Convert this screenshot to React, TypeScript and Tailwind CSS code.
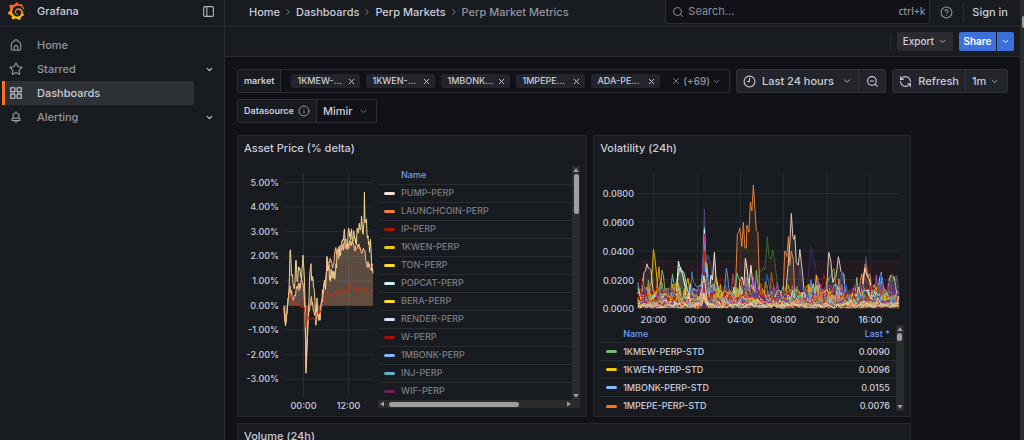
import type { ReactNode } from 'react';
import {
  ChevronDown,
  ChevronRight,
  CircleHelp,
  Clock9,
  Info,
  PanelLeft,
  RefreshCcw,
  Search,
  Star,
  X,
  ZoomOut,
} from 'lucide-react';
import { SiGrafana } from 'react-icons/si';
import clsx from 'clsx';

type Point = [number, number];

interface LegendRow {
  name: string;
  color: string;
  value?: string;
}

function PathIcon({ d }: { d: string }) {
  return (
    <svg viewBox="0 0 24 24" className="size-3.5 fill-current" aria-hidden="true">
      <path d={d} />
    </svg>
  );
}

const HOME_PATH =
  'M20,8h0L14,2.74a3,3,0,0,0-4,0L4,8a3,3,0,0,0-1,2.26V19a3,3,0,0,0,3,3H18a3,3,0,0,0,3-3V10.25A3,3,0,0,0,20,8ZM14,20H10V15a1,1,0,0,1,1-1h2a1,1,0,0,1,1,1Zm5-1a1,1,0,0,1-1,1H16V15a3,3,0,0,0-3-3H11a3,3,0,0,0-3,3v5H6a1,1,0,0,1-1-1V10.25a1,1,0,0,1,.34-.75l6-5.25a1,1,0,0,1,1.32,0l6,5.25a1,1,0,0,1,.34.75Z';
const APPS_PATH =
  'M10,13H3a1,1,0,0,0-1,1v7a1,1,0,0,0,1,1h7a1,1,0,0,0,1-1V14A1,1,0,0,0,10,13ZM9,20H4V15H9ZM21,2H14a1,1,0,0,0-1,1v7a1,1,0,0,0,1,1h7a1,1,0,0,0,1-1V3A1,1,0,0,0,21,2ZM20,9H15V4h5Zm1,4H14a1,1,0,0,0-1,1v7a1,1,0,0,0,1,1h7a1,1,0,0,0,1-1V14A1,1,0,0,0,21,13Zm-1,7H15V15h5ZM10,2H3A1,1,0,0,0,2,3v7a1,1,0,0,0,1,1h7a1,1,0,0,0,1-1V3A1,1,0,0,0,10,2ZM9,9H4V4H9Z';
const BELL_PATH =
  'M18,13.18V10a6,6,0,0,0-5-5.91V3a1,1,0,0,0-2,0V4.09A6,6,0,0,0,6,10v3.18A3,3,0,0,0,4,16v2a1,1,0,0,0,1,1H8.14a4,4,0,0,0,7.72,0H19a1,1,0,0,0,1-1V16A3,3,0,0,0,18,13.18ZM8,10a4,4,0,0,1,8,0v3H8Zm4,10a2,2,0,0,1-1.72-1h3.44A2,2,0,0,1,12,20Zm6-3H6V16a1,1,0,0,1,1-1H17a1,1,0,0,1,1,1Z';

const NAV = [
  { label: 'Home', icon: <PathIcon d={HOME_PATH} /> },
  { label: 'Starred', icon: <Star size={14} />, expandable: true },
  { label: 'Dashboards', icon: <PathIcon d={APPS_PATH} />, active: true },
  { label: 'Alerting', icon: <PathIcon d={BELL_PATH} />, expandable: true },
];

const CRUMBS = ['Home', 'Dashboards', 'Perp Markets'];
const MARKETS = ['1KMEW-...', '1KWEN-...', '1MBONK...', '1MPEPE...', 'ADA-PE...'];

const PRICE_LEGEND: LegendRow[] = [
  { name: 'PUMP-PERP', color: '#f9e2d2' },
  { name: 'LAUNCHCOIN-PERP', color: '#ef843c' },
  { name: 'IP-PERP', color: '#a81502' },
  { name: '1KWEN-PERP', color: '#f2c414' },
  { name: 'TON-PERP', color: '#fade2a' },
  { name: 'POPCAT-PERP', color: '#cff0fa' },
  { name: 'BERA-PERP', color: '#fade2a' },
  { name: 'RENDER-PERP', color: '#dedaf7' },
  { name: 'W-PERP', color: '#a01208' },
  { name: '1MBONK-PERP', color: '#8ab8ff' },
  { name: 'INJ-PERP', color: '#64b0c8' },
  { name: 'WIF-PERP', color: '#6d1f62' },
];

const VOL_LEGEND: LegendRow[] = [
  { name: '1KMEW-PERP-STD', color: '#73bf69', value: '0.0090' },
  { name: '1KWEN-PERP-STD', color: '#f2cc0c', value: '0.0096' },
  { name: '1MBONK-PERP-STD', color: '#8ab8ff', value: '0.0155' },
  { name: '1MPEPE-PERP-STD', color: '#ff780a', value: '0.0076' },
];

// small deterministic generator, so that the series are stable between renders
function createRandom(seed: number) {
  let s = seed;
  return () => {
    s = (s * 1664525 + 1013904223) % 4294967296;
    return s / 4294967296;
  };
}

function toPath(points: Point[]) {
  return points.map(([x, y], i) => `${i ? 'L' : 'M'}${x.toFixed(1)} ${y.toFixed(1)}`).join('');
}

// fills in the samples between key points and adds some noise
function densify(keys: Point[], step: number, noise: number, seed: number): Point[] {
  const rand = createRandom(seed);
  const out: Point[] = [];
  for (let i = 0; i < keys.length - 1; i++) {
    const [x0, y0] = keys[i];
    const [x1, y1] = keys[i + 1];
    const n = Math.max(1, Math.round((x1 - x0) / step));
    for (let k = 0; k < n; k++) {
      const t = k / n;
      out.push([x0 + (x1 - x0) * t, y0 + (y1 - y0) * t + (k ? (rand() - 0.5) * noise : 0)]);
    }
  }
  out.push(keys[keys.length - 1]);
  return out;
}

/* ---------- asset price ---------- */

const priceX = (t: number) => 46 + t;
const priceY = (pct: number) => 139.5 - pct * 24.6;

const PUMP: Point[] = [
  [0, 0], [1, -0.7], [3, -0.3], [4, 0.3], [5, 0.6], [6, 2.2], [7, 1.8], [8, 1.2], [9, 0.9], [11, 1], [12, 1.85],
  [13, 1], [14, 1.2], [16, 1.5], [17, 1.2], [18, 1.5], [19, 2.05], [20, 1.4], [21, 0.2], [21.6, -1.5], [22, -2.75],
  [23, -1.8], [24, -0.8], [25, 0.3], [26, 1.4], [27, 1.7], [28, 1], [29, 1.1], [30, 0.7], [31, 0.2], [32, -0.8],
  [33, 0.3], [34, -0.4], [36, -0.6], [37, -0.1], [38, 0.3], [40, 0.9], [41, 0.8], [42, 1], [43, 2], [44, 1.5],
  [46, 1.2], [48, 1.1], [49, 1.4], [51, 1.1], [52, 1.7], [54, 2.3], [55, 2], [57, 2.4], [59, 2.7], [60, 3],
  [61, 2.6], [63, 2.5], [64, 2.9], [66, 3], [68, 2.8], [70, 3], [72, 2.7], [74, 3], [76, 3.1], [78, 3.4],
  [79, 2.9], [80, 3.4], [80.4, 4.6], [81, 3.4], [82, 3.5], [83, 2.9], [85, 2.6], [86, 2.4], [87, 2.3], [88, 1.4],
  [89, 1.3],
];
const LAUNCH: Point[] = [
  [0, -0.1], [2, -0.7], [3, -0.3], [4, 0.2], [5, 0.6], [6, 0.8], [8, 0.4], [9, 0.3], [11, 0.4], [12, 0.6],
  [14, 0.8], [16, 0.7], [17, 1], [19, 0.9], [20, 0.5], [21, -0.5], [22, -2.5], [23, -1.4], [24, -0.5], [26, 0],
  [27, 0.3], [29, -0.1], [31, -0.4], [33, 0.1], [34, -0.5], [36, -0.4], [37, 0], [39, 0.4], [40, 0.9], [41, 0.9],
  [42, 1.2], [43, 1.9], [45, 1.7], [46, 1.9], [48, 1.7], [49, 1.6], [51, 2.2], [53, 2.2], [55, 2.4], [58, 2.3],
  [61, 2.5], [63, 2.3], [66, 2.5], [67, 2.6], [70, 2.4], [72, 2.3], [75, 2.5], [77, 2.2], [79, 2.3], [81, 2.2],
  [83, 1.6], [85, 1.7], [87, 1.5], [89, 1.6],
];
const IP: Point[] = [
  [6, 0.5], [10, 0], [12, 0.1], [16, 0.05], [19, 0], [21, -0.3], [22, -0.9], [23, -0.5], [25, -0.6], [28, -0.5],
  [31, -0.6], [33, -0.3], [36, -0.3], [39, 0], [41, 0.3], [43, 0.6], [45, 0.5], [47, 0.3], [50, 0.5], [53, 0.6],
  [59, 0.55], [64, 0.6], [66, 0.9], [69, 0.7], [73, 0.7], [77, 0.65], [81, 0.65], [86, 0.5], [89, 0.65],
];

const priceSeries = [
  { keys: IP, color: '#c4301a', noise: 0.2, step: 1, seed: 7, fill: 0.08 },
  { keys: PUMP, color: '#f2d590', noise: 0.7, step: 0.5, seed: 21, fill: 0.12 },
  { keys: LAUNCH, color: '#fbb98a', noise: 0.35, step: 0.5, seed: 5, fill: 0.2 },
].map((s) => {
  const points = densify(s.keys, s.step, s.noise, s.seed).map(([t, v]): Point => [priceX(t), priceY(v)]);
  return { ...s, start: points[0][0], line: toPath(points) };
});

function PriceChart() {
  return (
    <svg viewBox="0 0 140 244" className="w-[140px] shrink-0 font-medium" role="img" aria-label="Asset price chart">
      {[5, 4, 3, 2, 1, 0, -1, -2, -3].map((v) => (
        <g key={v}>
          <line x1="46" x2="135" y1={priceY(v)} y2={priceY(v)} stroke="#2a2d32" />
          <text x="41" y={priceY(v) + 3} textAnchor="end" fontSize="9" fill="#ccccdc">
            {v.toFixed(2)}%
          </text>
        </g>
      ))}
      {[['00:00', 65.5], ['12:00', 110.5]].map(([label, x]) => (
        <g key={label}>
          <line x1={x} x2={x} y1="7" y2="231" stroke="#2a2d32" />
          <text x={x} y="243" textAnchor="middle" fontSize="9" fill="#ccccdc">
            {label}
          </text>
        </g>
      ))}
      {priceSeries.map((s) => (
        <path key={s.color} d={`${s.line}L135 139.5L${s.start} 139.5Z`} fill={s.color} fillOpacity={s.fill} />
      ))}
      {[1, 2, 0].map((i) => (
        <path key={i} d={priceSeries[i].line} fill="none" stroke={priceSeries[i].color} strokeWidth="1" />
      ))}
    </svg>
  );
}

/* ---------- volatility ---------- */

const volY = (v: number) => 142.5 - v * 1437.5;

const NOISE_COLORS = [
  '#73bf69', '#e0b400', '#8ab8ff', '#ff780a', '#a352cc', '#1f60c4', '#a01208', '#6d1f62', '#447ebc', '#c15c17',
  '#890f02', '#e0b400', '#584477', '#b7dbab', '#ef843c', '#70dbed', '#bf1b00', '#e5ac0e', '#962d82', '#614d93',
  '#629e51', '#f9ba8f', '#1f60c4', '#e0752d', '#bf1b00', '#e0b400', '#962d82', '#64b0c8', '#a01208', '#f4d598',
  '#5195ce', '#f9934e', '#962d82', '#9ac48a', '#f2c96d', '#f4d598',
];

const noiseSeries = NOISE_COLORS.map((color, i) => {
  const rand = createRandom(i * 7919 + 13);
  for (let k = 0; k < 5; k++) rand();
  const scale = 0.018 - (i / NOISE_COLORS.length) * 0.014;
  const points: Point[] = [];
  let level = rand();
  for (let x = 44; x <= 305; x += 1.5) {
    level = level * 0.55 + rand() * 0.45;
    const burst = rand() > 0.965 ? 1 + rand() : 0;
    level += burst * 0.3;
    const v = Math.max(0.0004, (level - 0.2) * scale * 1.5);
    // all markets moved together just after midnight
    const shared = Math.max(0, 1 - Math.abs(x - 110.5) / 3.5) * rand() * 0.022;
    points.push([x, volY(v + shared)]);
  }
  return { color, line: toPath(points) };
});

const SPIKES: { color: string; points: Point[] }[] = [
  { color: '#584477', points: [[106, 0.005], [108, 0.02], [110.5, 0.069], [112, 0.03], [114, 0.037], [117, 0.03], [119, 0.008]] },
  { color: '#5195ce', points: [[107, 0.006], [109, 0.02], [110.5, 0.057], [113, 0.02], [115, 0.008]] },
  { color: '#cffaff', points: [[108, 0.008], [110.5, 0.055], [112, 0.018], [115, 0.006]] },
  { color: '#962d82', points: [[106, 0.004], [109, 0.03], [110.5, 0.052], [113, 0.012], [116, 0.004]] },
  { color: '#bf1b00', points: [[107, 0.005], [109, 0.018], [110.5, 0.04], [112, 0.015], [115, 0.006]] },
  { color: '#629e51', points: [[79, 0.006], [82, 0.017], [85, 0.03], [88, 0.024], [91, 0.016], [94, 0.006]] },
  { color: '#b7dbab', points: [[81, 0.004], [84, 0.022], [86, 0.028], [89, 0.026], [92, 0.018], [96, 0.009], [101, 0.006]] },
  { color: '#cffaff', points: [[82, 0.008], [84.5, 0.033], [87, 0.028], [90, 0.019], [94, 0.012], [98, 0.012], [104, 0.014]] },
  { color: '#e0b400', points: [[44, 0.016], [47, 0.007], [53, 0.009], [57, 0.016], [59.5, 0.041], [62, 0.028], [65, 0.008], [90, 0.01], [94, 0.021], [98, 0.009]] },
  { color: '#dfc9bb', points: [[44, 0.008], [48, 0.012], [50, 0.025], [53, 0.031], [57, 0.027], [59, 0.013], [62, 0.006]] },
  { color: '#ef843c', points: [[44, 0.018], [46, 0.01], [49, 0.021], [51, 0.008], [62, 0.008], [65, 0.029], [68, 0.008]] },
  { color: '#f9e2d2', points: [[115, 0.006], [117, 0.023], [118.5, 0.02], [120.5, 0.039], [122, 0.022], [124, 0.016], [127, 0.005]] },
  { color: '#e0b400', points: [[118, 0.005], [122, 0.022], [125, 0.009], [130, 0.014], [134, 0.006]] },
  { color: '#5195ce', points: [[129, 0.005], [132.5, 0.028], [135, 0.014], [138, 0.005]] },
  { color: '#b8453a', points: [[136, 0.004], [139, 0.024], [142, 0.006]] },
  { color: '#3f6833', points: [[164, 0.004], [166, 0.027], [171, 0.027], [173.5, 0.05], [175, 0.036], [177, 0.034], [179, 0.041], [181, 0.032], [183, 0.02], [186, 0.006]] },
  { color: '#e0803f', points: [[141, 0.006], [142, 0.022], [143.5, 0.052], [146, 0.056], [148, 0.043], [149.5, 0.06], [151, 0.042], [152.5, 0.042], [153, 0.058], [155, 0.053], [156.5, 0.074], [158, 0.068], [159.5, 0.086], [161, 0.07], [162.5, 0.054], [164, 0.053], [165, 0.03], [166, 0.006]] },
  { color: '#f9e2d2', points: [[144, 0.004], [146, 0.018], [148, 0.022], [150, 0.016], [151.5, 0.035], [153.5, 0.026], [155, 0.014], [157, 0.03], [159, 0.017], [161, 0.008]] },
  { color: '#e0803f', points: [[189, 0.006], [191, 0.04], [193, 0.036], [194.5, 0.05], [196, 0.03], [197.5, 0.04], [199.5, 0.034], [201, 0.006]] },
  { color: '#3a2d60', points: [[203, 0.008], [206, 0.029], [209, 0.012], [213, 0.01], [215, 0.028], [217.5, 0.043], [220, 0.034], [222, 0.028], [224, 0.008]] },
  { color: '#dfc9bb', points: [[191, 0.005], [194, 0.028], [196, 0.045], [197.5, 0.066], [199, 0.05], [200, 0.048], [201, 0.051], [202.5, 0.032], [204.5, 0.03], [206, 0.041], [207.5, 0.032], [209, 0.022], [211, 0.006]] },
  { color: '#5195ce', points: [[214, 0.005], [217, 0.02], [220, 0.008]] },
  { color: '#e0b400', points: [[208, 0.006], [214, 0.016], [218, 0.008], [225, 0.018], [228, 0.007]] },
  { color: '#629e51', points: [[230, 0.006], [232, 0.018], [237, 0.022], [240, 0.028], [243, 0.008]] },
  { color: '#dfc9bb', points: [[232, 0.006], [235, 0.039], [237, 0.033], [239, 0.018], [242, 0.022], [244.5, 0.036], [247, 0.026], [250, 0.024], [252, 0.008]] },
  { color: '#584477', points: [[266, 0.006], [270, 0.02], [272, 0.036], [274, 0.026], [277, 0.008], [296, 0.008], [299, 0.02], [302, 0.022], [305, 0.009]] },
  { color: '#ef843c', points: [[264, 0.006], [268, 0.024], [269.5, 0.017], [271.5, 0.031], [274, 0.022], [276, 0.024], [279, 0.007]] },
  { color: '#f9e2d2', points: [[267, 0.004], [271, 0.028], [274, 0.022], [277, 0.016], [283, 0.01], [287.5, 0.025], [290, 0.008], [294, 0.014], [297, 0.023], [300, 0.022], [303, 0.01]] },
  { color: '#3f6833', points: [[294, 0.008], [298, 0.024], [301, 0.018], [303, 0.023], [305, 0.014]] },
];

const X_TICKS: [string, number][] = [
  ['20:00', 59.5],
  ['00:00', 103.5],
  ['04:00', 146.5],
  ['08:00', 189.5],
  ['12:00', 233.5],
  ['16:00', 276.5],
];

function VolatilityChart() {
  const floor = volY(0);
  return (
    <svg viewBox="0 0 316 159" className="w-full font-medium" role="img" aria-label="Volatility chart">
      {[0.08, 0.06, 0.04, 0.02, 0].map((v) => (
        <g key={v}>
          <line x1="44" x2="305" y1={volY(v)} y2={volY(v)} stroke="#2a2d32" />
          <text x="40" y={volY(v) + 4} textAnchor="end" fontSize="9" fill="#ccccdc">
            {v.toFixed(4)}
          </text>
        </g>
      ))}
      {X_TICKS.map(([label, x]) => (
        <g key={label}>
          <line x1={x} x2={x} y1="7" y2="146" stroke="#2a2d32" />
          <text x={x} y="157" textAnchor="middle" fontSize="9" fill="#ccccdc">
            {label}
          </text>
        </g>
      ))}
      <rect x="44" y="95" width="261" height="47.5" fill="#c4162a" fillOpacity="0.06" />
      <line x1="44" x2="305" y1="95.5" y2="95.5" stroke="#4c161b" />
      {SPIKES.map((s, i) => {
        const line = toPath(densify(s.points, 1.5, 0.004, i + 3).map(([x, v]): Point => [x, volY(v)]));
        const end = s.points[s.points.length - 1][0];
        return (
          <g key={i}>
            <path d={`${line}L${end} ${floor}L${s.points[0][0]} ${floor}Z`} fill={s.color} fillOpacity="0.1" />
            <path d={line} fill="none" stroke={s.color} strokeWidth="1" />
          </g>
        );
      })}
      {noiseSeries.map((s, i) => (
        <path key={i} d={s.line} fill="none" stroke={s.color} strokeWidth="1" />
      ))}
    </svg>
  );
}

/* ---------- building blocks ---------- */

function Panel({ title, className, children }: { title: string; className?: string; children?: ReactNode }) {
  return (
    <section className={clsx('flex flex-col border border-[#25272c] bg-[#181b1f]', className)}>
      <h2 className="px-1.5 pt-0.5 pb-2 text-[11px] leading-5 font-medium">{title}</h2>
      {children}
    </section>
  );
}

function Triangle({ className }: { className?: string }) {
  return (
    <svg viewBox="0 0 6 6" className={clsx('size-1.5 shrink-0 fill-[#a0a0a0]', className)} aria-hidden="true">
      <path d="M3 1L5.6 5H0.4Z" />
    </svg>
  );
}

function VerticalScrollbar({ thumb }: { thumb: string }) {
  return (
    <div className="flex w-2 shrink-0 flex-col items-center justify-between bg-[#2c2c2c] py-px">
      <div className="flex flex-col items-center gap-px">
        <Triangle />
        <div className={clsx('w-[5px] rounded-full bg-[#9f9f9f]', thumb)} />
      </div>
      <Triangle className="rotate-180" />
    </div>
  );
}

function LegendTable({ rows, dimmed }: { rows: LegendRow[]; dimmed?: boolean }) {
  const withValue = rows.some((r) => r.value);
  return (
    <table className="w-full border-collapse text-left text-[9px] leading-4 font-medium">
      <thead>
        <tr className="h-[18px] text-[#6e9fff]">
          <th className="w-[23px] p-0" aria-label="Color" />
          <th className="p-0 font-medium">Name</th>
          {withValue && <th className="p-0 pr-1.5 text-right font-medium">Last *</th>}
        </tr>
      </thead>
      <tbody>
        {rows.map((row) => (
          <tr key={row.name} className={clsx('h-[18px] border-t border-[#292c31]', dimmed && 'text-[#7d7e87]')}>
            <td className="p-0 pl-1.5">
              <div className="h-[3px] w-[11px] rounded-full" style={{ backgroundColor: row.color }} />
            </td>
            <td className="p-0">{row.name}</td>
            {withValue && <td className="p-0 pr-1.5 text-right">{row.value}</td>}
          </tr>
        ))}
      </tbody>
    </table>
  );
}

function Sidebar() {
  return (
    <aside className="w-[225px] shrink-0 border-r border-[#292b30] bg-[#181b1f]">
      <div className="flex h-[27px] items-center border-b border-[#292b30] pr-[9px] pb-1 pl-[7px]">
        <svg className="size-0" aria-hidden="true">
          <linearGradient id="grafana-logo" x1="0" y1="1" x2="0" y2="0">
            <stop offset="0" stopColor="#fcd20a" />
            <stop offset="0.5" stopColor="#f58a2c" />
            <stop offset="1" stopColor="#f05a28" />
          </linearGradient>
        </svg>
        <SiGrafana size={18} fill="url(#grafana-logo)" />
        <span className="ml-3 flex-1 text-[11px] font-medium">Grafana</span>
        <button type="button" aria-label="Undock menu">
          <PanelLeft size={13} className="text-[#b5b6c3]" />
        </button>
      </div>
      <nav className="pt-1.5 pl-0.5">
        <ul>
          {NAV.map(({ label, icon, active, expandable }) => (
            <li key={label} className="flex h-6 items-center justify-between pr-2.5">
              <a
                href={`#${label.toLowerCase()}`}
                className={clsx(
                  'flex h-6 w-48 items-center gap-3.5 rounded-r-xs border-l-[3px] pl-1 text-[11px] font-medium',
                  active ? 'border-[#ff6f20] bg-[#2e3135]' : 'border-transparent text-[#93949f]',
                )}
              >
                {icon}
                {label}
              </a>
              {expandable && (
                <button type="button" aria-label={`Expand ${label}`}>
                  <ChevronDown size={9} strokeWidth={3} />
                </button>
              )}
            </li>
          ))}
        </ul>
      </nav>
    </aside>
  );
}

function TopBar() {
  return (
    <header className="flex h-[27px] items-center border-b border-[#292b30] bg-[#181b1f] pr-3 pl-6 text-[11px] font-medium">
      <nav aria-label="Breadcrumbs" className="flex flex-1 items-center gap-[3px] pb-0.5">
        {CRUMBS.map((crumb) => (
          <span key={crumb} className="flex items-center gap-[3px]">
            <a href={`#${crumb}`}>{crumb}</a>
            <ChevronRight size={10} className="text-[#93949f]" />
          </span>
        ))}
        <span className="text-[#93949f]">Perp Market Metrics</span>
      </nav>
      <label className="flex h-6 w-[265px] items-center gap-1 self-start rounded-b-xs border border-t-0 border-[#2c2e33] bg-[#111217] pr-1 pl-1.5 text-[#8e8f9a]">
        <Search size={12} strokeWidth={2} />
        <input
          type="search"
          aria-label="Search"
          placeholder="Search..."
          className="min-w-0 flex-1 font-normal placeholder:text-[#8e8f9a] focus:outline-none"
        />
        <kbd className="font-sans text-[10px]">ctrl+k</kbd>
      </label>
      <button type="button" aria-label="Help" className="ml-2.5 pb-0.5 text-[#93949f]">
        <CircleHelp size={13} />
      </button>
      <div className="ml-2.5 h-5 w-px bg-[#2c2e33]" />
      <a href="#login" className="ml-2 pb-0.5">
        Sign in
      </a>
    </header>
  );
}

function Toolbar() {
  return (
    <div className="flex h-[30px] items-center justify-end border-b border-[#292b30] bg-[#181b1f] pr-1.5 text-[10px] font-medium">
      <div className="mr-1.5 h-[18px] w-px bg-[#2c2e33]" />
      <button type="button" className="flex h-[19px] items-center gap-1 rounded-xs bg-[#2b2c31] px-1.5">
        Export
        <ChevronDown size={9} />
      </button>
      <button type="button" className="ml-1.5 h-[19px] w-[37px] rounded-l-xs bg-[#3d71d9] font-semibold text-white">
        Share
      </button>
      <button
        type="button"
        aria-label="Share options"
        className="ml-px flex h-[19px] items-center rounded-r-xs bg-[#3d71d9] px-1 text-white"
      >
        <ChevronDown size={9} strokeWidth={2.5} />
      </button>
    </div>
  );
}

function Controls() {
  return (
    <div className="flex items-start gap-1.5 text-[11px] font-medium">
      <div className="flex min-w-0 flex-1 flex-wrap gap-1.5">
        <div className="flex h-6 w-full items-center rounded-xs border border-[#2c2e33]">
          <label
            htmlFor="market"
            className="flex h-full items-center border-r border-[#2c2e33] bg-[#181b1f] px-1.5 text-[9px] font-semibold"
          >
            market
          </label>
          <ul className="ml-2.5 flex gap-1.5 text-[9px]">
            {MARKETS.map((market) => (
              <li key={market} className="flex h-3.5 w-[69px] items-center justify-between rounded-xs bg-[#22252b] pr-1 pl-1.5">
                {market}
                <button type="button" aria-label={`Remove ${market}`}>
                  <X size={9} strokeWidth={2.5} />
                </button>
              </li>
            ))}
          </ul>
          <input id="market" type="text" className="w-0 flex-1 focus:outline-none" />
          <div className="flex items-center gap-0.5 pr-2 text-[10px] text-[#93949f]">
            <button type="button" aria-label="Clear markets">
              <X size={10} />
            </button>
            (+69)
            <ChevronDown size={9} />
          </div>
        </div>
        <div className="flex h-6 items-center rounded-xs border border-[#2c2e33]">
          <label
            htmlFor="datasource"
            className="flex h-full items-center gap-1 border-r border-[#2c2e33] bg-[#181b1f] px-1.5 text-[9px] font-semibold"
          >
            Datasource
            <Info size={12} className="text-[#93949f]" />
          </label>
          <div className="grid items-center">
            <select id="datasource" className="col-start-1 row-start-1 w-[59px] appearance-none pl-1.5 focus:outline-none">
              <option>Mimir</option>
            </select>
            <ChevronDown size={9} className="pointer-events-none col-start-1 row-start-1 mr-2 justify-self-end text-[#93949f]" />
          </div>
        </div>
      </div>

      <div className="flex h-6 shrink-0 rounded-xs border border-[#303238] bg-[#22252b]">
        <button type="button" className="flex w-[122px] items-center gap-1.5 border-r border-[#303238] px-1.5">
          <Clock9 size={13} />
          <span className="flex-1 text-left">Last 24 hours</span>
          <ChevronDown size={10} />
        </button>
        <button type="button" aria-label="Zoom out time range" className="flex w-[26px] items-center justify-center">
          <ZoomOut size={13} />
        </button>
      </div>

      <div className="flex h-6 shrink-0 rounded-xs border border-[#303238] bg-[#22252b]">
        <button type="button" className="flex w-[73px] items-center justify-between border-r border-[#303238] px-1.5">
          <RefreshCcw size={13} />
          Refresh
        </button>
        <div className="grid items-center">
          <select
            aria-label="Refresh interval"
            className="col-start-1 row-start-1 w-[41px] appearance-none pl-1.5 focus:outline-none"
          >
            <option>1m</option>
          </select>
          <ChevronDown size={9} className="pointer-events-none col-start-1 row-start-1 mr-2 justify-self-end" />
        </div>
      </div>
    </div>
  );
}

export default function App() {
  return (
    <div className="flex h-screen overflow-hidden bg-[#111217] font-['Inter',sans-serif] text-[#ccccdc]">
      <Sidebar />
      <div className="flex min-w-0 flex-1 flex-col">
        <TopBar />
        <Toolbar />
        <main className="min-h-0 flex-1 px-3 pt-3">
          <Controls />
          <div className="mt-3 grid grid-cols-24 gap-1.5">
            <Panel title="Asset Price (% delta)" className="col-span-11">
              <div className="flex pr-1.5 pb-1.5">
                <PriceChart />
                <div className="min-w-0 flex-1">
                  <div className="flex">
                    <div className="min-w-0 flex-1">
                      <LegendTable rows={PRICE_LEGEND} dimmed />
                    </div>
                    <VerticalScrollbar thumb="h-10" />
                  </div>
                  <div className="flex h-2 items-center gap-1 bg-[#2c2c2c] pr-2 pl-px">
                    <Triangle className="-rotate-90" />
                    <div className="flex-1">
                      <div className="h-[5px] w-3/4 rounded-full bg-[#9f9f9f]" />
                    </div>
                    <Triangle className="rotate-90" />
                  </div>
                </div>
              </div>
            </Panel>
            <Panel title="Volatility (24h)" className="col-span-10">
              <VolatilityChart />
              <div className="flex h-[86px] overflow-hidden pr-1.5 pl-1.5">
                <div className="min-w-0 flex-1">
                  <LegendTable rows={VOL_LEGEND} />
                </div>
                <VerticalScrollbar thumb="h-2" />
              </div>
            </Panel>
            <Panel title="Volume (24h)" className="col-span-21 h-72" />
          </div>
        </main>
      </div>
      <div className="flex w-1 shrink-0 flex-col items-end bg-[#2c2c2c] pt-4">
        <div className="h-3 w-0.5 rounded-l-full bg-[#9f9f9f]" />
      </div>
    </div>
  );
}
